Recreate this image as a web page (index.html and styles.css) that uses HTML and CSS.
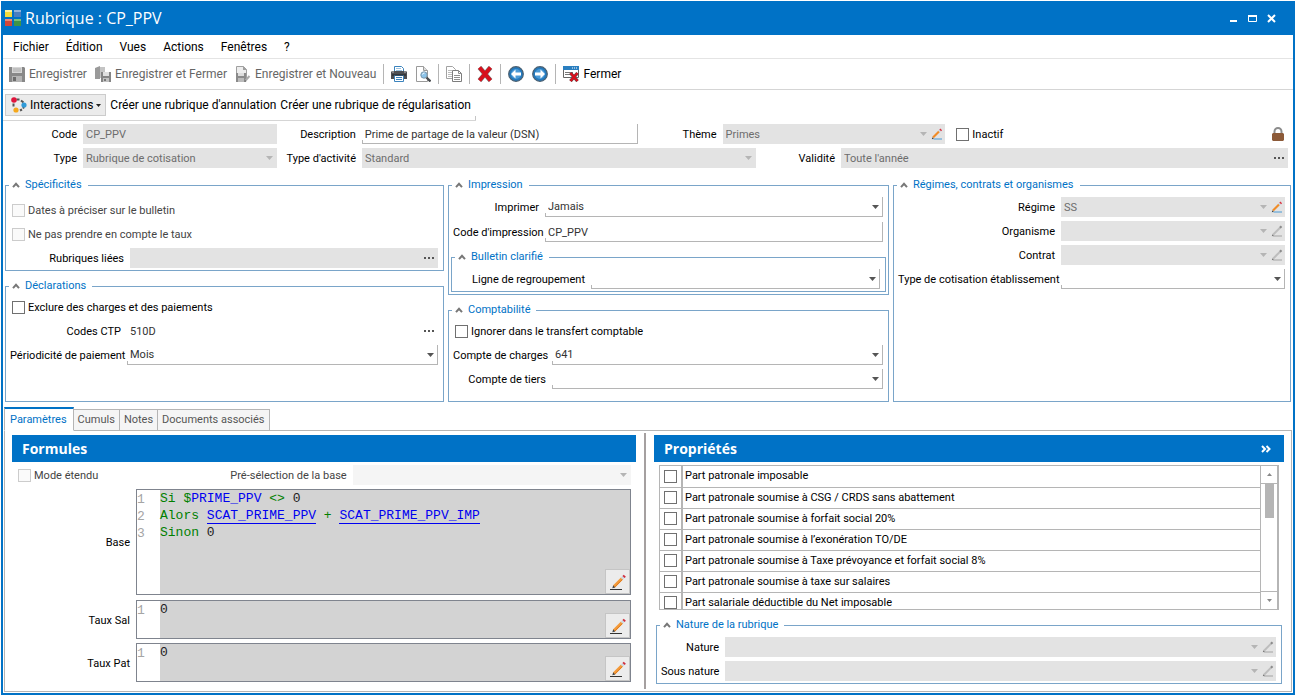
FILE: index.html
```html
<!DOCTYPE html>
<html lang="fr">
<head>
    <meta charset="UTF-8">
    <meta name="viewport" content="width=device-width, initial-scale=1.0">
    <title>Rubrique : CP_PPV</title>
    <link rel="stylesheet" href="styles.css">
</head>
<body>
    <!-- Icônes partagées -->
    <svg class="sprite" width="0" height="0" aria-hidden="true">
        <symbol id="fleche" viewBox="0 0 7 4"><path d="M0 0h7L3.500 4z" fill="currentColor"/></symbol>
        <symbol id="points" viewBox="0 0 11 2"><path d="M0 0h2v2H0zM4 0h2v2H4zM8 0h2v2H8z" fill="currentColor"/></symbol>
        <symbol id="chevron" viewBox="0 0 8 6"><path d="M1 5.200l3-3.400 3 3.400" fill="none" stroke="#777" stroke-width="2"/></symbol>
        <symbol id="crayon" viewBox="0 0 12 12">
            <path d="M2.500 11h8.500" stroke="#4a9ad4"/>
            <path d="M2 9.500l6-6" stroke="#f08c28" stroke-width="2.200"/>
            <path d="M8 3.500l1.200-1.200" stroke="#c8d4dc" stroke-width="2.200"/>
            <path d="M9.200 2.300l1-1" stroke="#d9303e" stroke-width="2.400"/>
            <path d="M.8 11.200l.5-2 1.500 1.500z" fill="#444"/>
        </symbol>
        <symbol id="crayon-gris" viewBox="0 0 12 12">
            <path d="M2 11h9" stroke="#a3a3a3"/>
            <path d="M2 9.700l8-8" stroke="#bdbdbd" stroke-width="2"/>
            <path d="M9 2.700l1.500-1.500" stroke="#8a8a8a" stroke-width="2"/>
            <path d="M.8 11.200l.5-2 1.500 1.500z" fill="#777"/>
        </symbol>
        <symbol id="crayon-grand" viewBox="0 0 16 16">
            <path d="M0 15.500h12" stroke="#333"/>
            <path d="M4 12.500l8-8" stroke="#f39a3a" stroke-width="3"/>
            <path d="M4.700 13.200l8-8" stroke="#e07a1c" stroke-width="1"/>
            <path d="M11.800 4.700l1.700-1.700" stroke="#ccd8e0" stroke-width="3"/>
            <path d="M13.500 3l1.300-1.300" stroke="#d02c3c" stroke-width="3"/>
            <path d="M2.300 14.300l.9-3 2.100 2.100z" fill="#444"/>
        </symbol>
    </svg>

    <div class="fenetre">
        <header class="titre">
            <svg class="logo" viewBox="0 0 16 16">
                <path d="M0 0h7v7H0z" fill="#f4dc3c"/><path d="M9 0h7v7H9z" fill="#4a7fc0"/>
                <path d="M0 9h7v7H0z" fill="#d2473a"/><path d="M9 9h7v7H9z" fill="#3f9448"/>
                <path d="M0 0h7v2H0z" fill="#fdf3a0"/><path d="M9 0h7v2H9z" fill="#8fb2dc"/>
                <path d="M0 9h7v2H0z" fill="#ee8a76"/><path d="M9 9h7v2H9z" fill="#7fbf78"/>
            </svg>
            <h1>Rubrique : CP_PPV</h1>
            <div class="boutons-fenetre">
                <button aria-label="Réduire"><svg viewBox="0 0 9 9"><path d="M1 6h7v2H1z" fill="#fff"/></svg></button>
                <button aria-label="Agrandir"><svg viewBox="0 0 9 9"><path d="M.5 2v5.500h8V2z" fill="none" stroke="#fff"/><path d="M0 1h9v2H0z" fill="#fff"/></svg></button>
                <button aria-label="Fermer la fenêtre"><svg viewBox="0 0 9 9"><path d="M1 1l7 7M8 1l-7 7" stroke="#fff" stroke-width="2"/></svg></button>
            </div>
        </header>

        <nav class="menu">
            <button>Fichier</button>
            <button>Édition</button>
            <button>Vues</button>
            <button>Actions</button>
            <button>Fenêtres</button>
            <button>?</button>
        </nav>

        <!-- Barre d'outils -->
        <div class="outils">
            <button disabled>
                <svg viewBox="0 0 16 16"><path d="M0 1h15l1 1v14H0z" fill="#888"/><path d="M3 1h10v6H3z" fill="#d6d6d6"/><path d="M4 3h8M4 5h8" stroke="#aaa"/><path d="M3 10h10v6H3z" fill="#b4b4b4"/><path d="M4 11h3v4H4z" fill="#6c6c6c"/></svg>
                Enregistrer
            </button>
            <button disabled>
                <svg viewBox="0 0 16 16"><path d="M0 2l5-2v13H0z" fill="#9a9a9a"/><path d="M5 1h5v5H7v6H5z" fill="#c4c4c4"/><path d="M6 6h10v10H6z" fill="#858585"/><path d="M8 6h6v4H8z" fill="#e0e0e0"/><path d="M8 12h6v4H8z" fill="#c2c2c2"/><path d="M9 13h2v2H9z" fill="#777"/></svg>
                Enregistrer et Fermer
            </button>
            <button disabled>
                <svg viewBox="0 0 16 16"><path d="M1.500.5h7l3 3v9h-10z" fill="#ededed" stroke="#a0a0a0"/><path d="M8 0v4h4z" fill="#a0a0a0"/><path d="M1 7h10v9H1z" fill="#8a8a8a"/><path d="M3 7h6v3H3z" fill="#ddd"/><path d="M3 12h6v4H3z" fill="#bbb"/><path d="M10.500 14.500l4-4.500" stroke="#aaa" stroke-width="2"/><path d="M9.500 15.800l.5-2 1.500 1.500z" fill="#777"/></svg>
                Enregistrer et Nouveau
            </button>
            <span class="sep large"></span>
            <button aria-label="Imprimer la fiche">
                <svg viewBox="0 0 16 16"><path d="M3.500 6V.5h7l2 2V6" fill="#fff" stroke="#3b83bd"/><path d="M5 2.500h5M5 4.500h6" stroke="#9cc3e0"/><path d="M1 5h14l1 1v7h-3V9H3v4H0V6z" fill="#4d4f53"/><path d="M1 6h2M13 6h2" stroke="#c0c0c0"/><path d="M3.500 9.500h9v6h-9z" fill="#fff" stroke="#3b83bd"/><path d="M5 11.500h6M5 13.500h6" stroke="#3b83bd"/><path d="M1 9h14" stroke="#202224"/></svg>
            </button>
            <button aria-label="Aperçu">
                <svg viewBox="0 0 16 16"><path d="M1.500.5h7l4 4v11h-11z" fill="#fff" stroke="#9a9a9a"/><path d="M8.500.5v4h4" fill="#ddd" stroke="#9a9a9a"/><circle cx="9" cy="9" r="3.200" fill="#8cc4ea" stroke="#7c98ac"/><path d="M7.500 8.500a2 2 0 0 1 2-1.500" stroke="#fff" fill="none"/><path d="M11.500 11.500l4 4" stroke="#4a4d50" stroke-width="2.400"/></svg>
            </button>
            <span class="sep"></span>
            <button aria-label="Dupliquer">
                <svg viewBox="0 0 16 16"><path d="M.5.5h6l3 3v9h-9z" fill="#fff" stroke="#a2a2a2"/><path d="M2 4.500h4M2 6.500h5M2 8.500h4M2 10.500h4" stroke="#bbb"/><path d="M6.500 4.500h6l3 3v8h-9z" fill="#fff" stroke="#7d7d7d"/><path d="M12.500 4.500v3h3M8 9.500h6M8 11.500h6M8 13.500h6" stroke="#8e8e8e" fill="none"/></svg>
            </button>
            <span class="sep"></span>
            <button aria-label="Supprimer">
                <svg viewBox="0 0 16 16"><path d="M2.500 1.500l11 13M13.500 1.500l-11 13" stroke="#777" stroke-width="4.800"/><path d="M2.500 1.500l11 13M13.500 1.500l-11 13" stroke="#d8101c" stroke-width="3.600"/></svg>
            </button>
            <span class="sep"></span>
            <button aria-label="Précédent">
                <svg viewBox="0 0 16 16"><circle cx="8" cy="8" r="7.300" fill="#2379bd" stroke="#4a5f70" stroke-width="1.200"/><circle cx="8" cy="8" r="5" fill="#4b9ad6"/><path d="M3 8l4.500-4.500v3H13v3H7.500v3z" fill="#fff"/></svg>
            </button>
            <button aria-label="Suivant">
                <svg viewBox="0 0 16 16"><circle cx="8" cy="8" r="7.300" fill="#2379bd" stroke="#4a5f70" stroke-width="1.200"/><circle cx="8" cy="8" r="5" fill="#4b9ad6"/><path d="M13 8L8.500 3.500v3H3v3h5.500v3z" fill="#fff"/></svg>
            </button>
            <span class="sep"></span>
            <button>
                <svg viewBox="0 0 16 16"><path d="M.5 1.500h15v10H.5z" fill="#fff" stroke="#666"/><path d="M0 0h16v4H0z" fill="#2a7fc0"/><path d="M9 2h1M11 2h1M13 2h1" stroke="#fff"/><path d="M2 6.500h8M2 8.500h6" stroke="#777"/><path d="M7.500 7l7 8M14.500 7l-7 8" stroke="#555" stroke-width="3.400"/><path d="M7.500 7l7 8M14.500 7l-7 8" stroke="#d8101c" stroke-width="2.400"/></svg>
                Fermer
            </button>
        </div>

        <div class="liens">
            <button class="interactions">
                <svg viewBox="0 0 16 16"><path d="M5.500 2.500l3 0M10 3.500l2.500 2M2.500 6.500v3M9 13.500l2-1M12 11.500l1-1.500" fill="none" stroke="#555" stroke-width="2"/><circle cx="3" cy="3" r="2.800" fill="#e0143c"/><circle cx="13" cy="8" r="2.600" fill="#2f9ad8"/><circle cx="5" cy="13" r="2.600" fill="#f5a81c"/></svg>
                Interactions
                <svg class="fleche"><use href="#fleche"/></svg>
            </button>
            <button>Créer une rubrique d'annulation</button>
            <button>Créer une rubrique de régularisation</button>
        </div>

        <!-- En-tête de la rubrique -->
        <div class="entete">
            <div class="ligne">
                <label class="court" for="code">Code</label>
                <div class="champ gris" style="flex-grow: 194"><input id="code" type="text" value="CP_PPV" disabled></div>
                <label for="description">Description</label>
                <div class="champ" style="flex-grow: 275"><input id="description" type="text" value="Prime de partage de la valeur (DSN)"></div>
                <label for="theme">Thème</label>
                <div class="champ gris" style="flex-grow: 223">
                    <select id="theme" disabled><option>Primes</option></select>
                    <svg class="fleche"><use href="#fleche"/></svg>
                    <button class="crayon" aria-label="Modifier le thème"><svg><use href="#crayon"/></svg></button>
                </div>
                <div class="etat" style="flex-grow: 343">
                    <label class="coche"><input type="checkbox">Inactif</label>
                    <svg class="cadenas" viewBox="0 0 12 14"><path d="M2.500 7V4.500a3.500 3.500 0 0 1 7 0V7" fill="none" stroke="#8c8c8c" stroke-width="2"/><path d="M1 6h10l1 1v6l-1 1H1l-1-1V7z" fill="#8c5a38"/></svg>
                </div>
            </div>
            <div class="ligne">
                <label class="court" for="type">Type</label>
                <div class="champ gris" style="flex-grow: 194">
                    <select id="type" disabled><option>Rubrique de cotisation</option></select>
                    <svg class="fleche"><use href="#fleche"/></svg>
                </div>
                <label for="activite">Type d'activité</label>
                <div class="champ gris" style="flex-grow: 394">
                    <select id="activite" disabled><option>Standard</option></select>
                    <svg class="fleche"><use href="#fleche"/></svg>
                </div>
                <label for="validite">Validité</label>
                <div class="champ gris" style="flex-grow: 447">
                    <input id="validite" type="text" value="Toute l'année" disabled>
                    <button class="points" aria-label="Choisir la validité"><svg><use href="#points"/></svg></button>
                </div>
            </div>
        </div>

        <!-- Groupes -->
        <div class="groupes">
            <div class="colonne">
                <fieldset class="specificites">
                    <legend><svg class="chevron"><use href="#chevron"/></svg>Spécificités</legend>
                    <div class="ligne"><label class="coche inactif"><input type="checkbox" disabled>Dates à préciser sur le bulletin</label></div>
                    <div class="ligne"><label class="coche inactif"><input type="checkbox" disabled>Ne pas prendre en compte le taux</label></div>
                    <div class="ligne">
                        <label for="liees">Rubriques liées</label>
                        <div class="champ gris">
                            <input id="liees" type="text" disabled>
                            <button class="points" aria-label="Choisir les rubriques"><svg><use href="#points"/></svg></button>
                        </div>
                    </div>
                </fieldset>
                <fieldset class="declarations">
                    <legend><svg class="chevron"><use href="#chevron"/></svg>Déclarations</legend>
                    <div class="ligne"><label class="coche"><input type="checkbox">Exclure des charges et des paiements</label></div>
                    <div class="ligne">
                        <label for="ctp">Codes CTP</label>
                        <div class="champ nu">
                            <input id="ctp" type="text" value="510D">
                            <button class="points" aria-label="Choisir les codes"><svg><use href="#points"/></svg></button>
                        </div>
                    </div>
                    <div class="ligne">
                        <label for="periodicite">Périodicité de paiement</label>
                        <div class="champ">
                            <select id="periodicite"><option>Mois</option></select>
                            <svg class="fleche"><use href="#fleche"/></svg>
                        </div>
                    </div>
                </fieldset>
            </div>

            <div class="colonne">
                <fieldset class="impression">
                    <legend><svg class="chevron"><use href="#chevron"/></svg>Impression</legend>
                    <div class="ligne">
                        <label for="imprimer">Imprimer</label>
                        <div class="champ">
                            <select id="imprimer"><option>Jamais</option></select>
                            <svg class="fleche"><use href="#fleche"/></svg>
                        </div>
                    </div>
                    <div class="ligne">
                        <label for="codeimp">Code d'impression</label>
                        <div class="champ"><input id="codeimp" type="text" value="CP_PPV"></div>
                    </div>
                    <fieldset class="bulletin">
                        <legend><svg class="chevron"><use href="#chevron"/></svg>Bulletin clarifié</legend>
                        <div class="ligne">
                            <label for="regroupement">Ligne de regroupement</label>
                            <div class="champ">
                                <select id="regroupement"><option></option></select>
                                <svg class="fleche"><use href="#fleche"/></svg>
                            </div>
                        </div>
                    </fieldset>
                </fieldset>
                <fieldset class="comptabilite">
                    <legend><svg class="chevron"><use href="#chevron"/></svg>Comptabilité</legend>
                    <div class="ligne"><label class="coche"><input type="checkbox">Ignorer dans le transfert comptable</label></div>
                    <div class="ligne">
                        <label for="charges">Compte de charges</label>
                        <div class="champ">
                            <select id="charges"><option>641</option></select>
                            <svg class="fleche"><use href="#fleche"/></svg>
                        </div>
                    </div>
                    <div class="ligne">
                        <label for="tiers">Compte de tiers</label>
                        <div class="champ">
                            <select id="tiers"><option></option></select>
                            <svg class="fleche"><use href="#fleche"/></svg>
                        </div>
                    </div>
                </fieldset>
            </div>

            <div class="colonne">
                <fieldset class="regimes">
                    <legend><svg class="chevron"><use href="#chevron"/></svg>Régimes, contrats et organismes</legend>
                    <div class="ligne">
                        <label for="regime">Régime</label>
                        <div class="champ gris">
                            <select id="regime" disabled><option>SS</option></select>
                            <svg class="fleche"><use href="#fleche"/></svg>
                            <button class="crayon" aria-label="Modifier le régime"><svg><use href="#crayon"/></svg></button>
                        </div>
                    </div>
                    <div class="ligne">
                        <label for="organisme">Organisme</label>
                        <div class="champ gris">
                            <select id="organisme" disabled><option></option></select>
                            <svg class="fleche"><use href="#fleche"/></svg>
                            <button class="crayon" aria-label="Modifier l'organisme" disabled><svg><use href="#crayon-gris"/></svg></button>
                        </div>
                    </div>
                    <div class="ligne">
                        <label for="contrat">Contrat</label>
                        <div class="champ gris">
                            <select id="contrat" disabled><option></option></select>
                            <svg class="fleche"><use href="#fleche"/></svg>
                            <button class="crayon" aria-label="Modifier le contrat" disabled><svg><use href="#crayon-gris"/></svg></button>
                        </div>
                    </div>
                    <div class="ligne">
                        <label for="cotisation">Type de cotisation établissement</label>
                        <div class="champ">
                            <select id="cotisation"><option></option></select>
                            <svg class="fleche"><use href="#fleche"/></svg>
                        </div>
                    </div>
                </fieldset>
            </div>
        </div>

        <!-- Onglets -->
        <div class="onglets">
            <button class="actif">Paramètres</button>
            <button>Cumuls</button>
            <button>Notes</button>
            <button>Documents associés</button>
        </div>

        <div class="panneau">
            <section class="formules">
                <h2>Formules</h2>
                <div class="ligne mode">
                    <label class="coche inactif"><input type="checkbox" disabled>Mode étendu</label>
                    <label class="inactif" for="preselection">Pré-sélection de la base</label>
                    <div class="champ pale">
                        <select id="preselection" disabled><option></option></select>
                        <svg class="fleche"><use href="#fleche"/></svg>
                    </div>
                </div>
                <div class="formule base">
                    <span class="nom">Base</span>
                    <div class="editeur">
                        <pre class="numeros">1
2
3</pre>
                        <pre class="code"><span class="mot">Si $</span><span class="var">PRIME_PPV</span> <span class="mot">&lt;&gt;</span> 0
<span class="mot">Alors</span> <a href="#">SCAT_PRIME_PPV</a> <span class="mot">+</span> <a href="#">SCAT_PRIME_PPV_IMP</a>
<span class="mot">Sinon</span> 0</pre>
                        <button class="modifier" aria-label="Modifier la base"><svg><use href="#crayon-grand"/></svg></button>
                    </div>
                </div>
                <div class="formule">
                    <label class="nom" for="tauxsal">Taux Sal</label>
                    <div class="editeur">
                        <pre class="numeros">1</pre>
                        <textarea id="tauxsal" class="code" rows="1">0</textarea>
                        <button class="modifier" aria-label="Modifier le taux salarial"><svg><use href="#crayon-grand"/></svg></button>
                    </div>
                </div>
                <div class="formule">
                    <label class="nom" for="tauxpat">Taux Pat</label>
                    <div class="editeur">
                        <pre class="numeros">1</pre>
                        <textarea id="tauxpat" class="code" rows="1">0</textarea>
                        <button class="modifier" aria-label="Modifier le taux patronal"><svg><use href="#crayon-grand"/></svg></button>
                    </div>
                </div>
            </section>

            <div class="separateur"></div>

            <section class="proprietes">
                <h2>Propriétés
                    <button class="replier" aria-label="Replier"><svg viewBox="0 0 10 8"><path d="M1 1l3 3-3 3M5.500 1l3 3-3 3" fill="none" stroke="#fff" stroke-width="2"/></svg></button>
                </h2>
                <div class="liste">
                    <div class="defile">
                        <table>
                            <tr><td><input type="checkbox" id="p1"></td><td><label for="p1">Part patronale imposable</label></td></tr>
                            <tr><td><input type="checkbox" id="p2"></td><td><label for="p2">Part patronale soumise à CSG / CRDS sans abattement</label></td></tr>
                            <tr><td><input type="checkbox" id="p3"></td><td><label for="p3">Part patronale soumise à forfait social 20%</label></td></tr>
                            <tr><td><input type="checkbox" id="p4"></td><td><label for="p4">Part patronale soumise à l’exonération TO/DE</label></td></tr>
                            <tr><td><input type="checkbox" id="p5"></td><td><label for="p5">Part patronale soumise à Taxe prévoyance et forfait social 8%</label></td></tr>
                            <tr><td><input type="checkbox" id="p6"></td><td><label for="p6">Part patronale soumise à taxe sur salaires</label></td></tr>
                            <tr><td><input type="checkbox" id="p7"></td><td><label for="p7">Part salariale déductible du Net imposable</label></td></tr>
                        </table>
                    </div>
                    <div class="ascenseur">
                        <button aria-label="Monter"><svg class="haut"><use href="#fleche"/></svg></button>
                        <div class="piste"><div class="curseur"></div></div>
                        <button aria-label="Descendre"><svg><use href="#fleche"/></svg></button>
                    </div>
                </div>
                <fieldset class="nature">
                    <legend><svg class="chevron"><use href="#chevron"/></svg>Nature de la rubrique</legend>
                    <div class="ligne">
                        <label for="nature">Nature</label>
                        <div class="champ gris">
                            <select id="nature" disabled><option></option></select>
                            <svg class="fleche"><use href="#fleche"/></svg>
                            <button class="crayon" aria-label="Modifier la nature" disabled><svg><use href="#crayon-gris"/></svg></button>
                        </div>
                    </div>
                    <div class="ligne">
                        <label for="sousnature">Sous nature</label>
                        <div class="champ gris">
                            <select id="sousnature" disabled><option></option></select>
                            <svg class="fleche"><use href="#fleche"/></svg>
                            <button class="crayon" aria-label="Modifier la sous nature" disabled><svg><use href="#crayon-gris"/></svg></button>
                        </div>
                    </div>
                </fieldset>
            </section>
        </div>
    </div>
</body>
</html>
```
FILE: styles.css
```css
/* Général */
* {
    box-sizing: border-box;
}

body {
    margin: 0;
    padding: 1px;
    background-color: white;
    font-family: Roboto, Tahoma, sans-serif;
    font-size: 11px;
    line-height: 14px;
    color: black;
}

button, input, select, textarea {
    font: inherit;
    color: inherit;
    margin: 0;
    padding: 0;
    border: none;
    border-radius: 0;
    background: none;
}

button, label {
    white-space: nowrap;
}

svg {
    display: block;
    flex: none;
}

.sprite {
    position: absolute;
}

.fenetre {
    display: flex;
    flex-direction: column;
    min-height: calc(100vh - 2px);
    border: 2px solid #0072c6;
    border-top: none;
}

/* Barre de titre */
.titre {
    display: flex;
    align-items: center;
    height: 34px;
    padding: 0 17px 0 2px;
    background-color: #0072c6;
    color: white;
}

.logo {
    width: 16px;
    height: 16px;
}

h1 {
    flex: 1;
    margin: 0 0 0 4px;
    font-family: "Open Sans", "Segoe UI", sans-serif;
    font-size: 16px;
    line-height: 22px;
    font-weight: normal;
}

.boutons-fenetre {
    display: flex;
    gap: 10px;
}

.boutons-fenetre svg {
    width: 9px;
    height: 9px;
}

/* Menu et barres d'outils */
.menu, .outils, .liens {
    display: flex;
    align-items: center;
    font-size: 12px;
    line-height: 16px;
}

.menu {
    height: 24px;
    gap: 17px;
    padding: 0 10px;
    border-bottom: 1px solid #e4e4e4;
}

.outils {
    height: 31px;
    padding: 0 2px;
    border-bottom: 1px solid #d5d5d5;
}

.outils button {
    display: flex;
    align-items: center;
    gap: 4px;
    padding: 0 4px;
}

.outils button:disabled {
    color: #666;
}

.outils button svg {
    width: 16px;
    height: 16px;
}

.sep {
    width: 1px;
    height: 20px;
    margin: 0 3px;
    background-color: #b5b5b5;
}

.liens {
    align-self: flex-start;
    height: 31px;
    gap: 4px;
    padding: 0 5px 0 2px;
    border-bottom: 1px solid #d5d5d5;
    background: linear-gradient(#c5c5c5, #c5c5c5) right bottom / 1px 4px no-repeat;
}

.interactions {
    display: flex;
    align-items: center;
    gap: 3px;
    height: 22px;
    padding: 0 4px 0 5px;
    border: 1px solid #ccc;
    background-color: #ebebeb;
}

.interactions svg {
    width: 16px;
    height: 16px;
}

.interactions .fleche {
    width: 5px;
    height: 3px;
    margin: 0;
    color: #222;
}

/* Champs */
.ligne {
    display: flex;
    align-items: center;
    height: 20px;
}

label {
    flex: none;
    text-align: right;
    padding: 2px 6px 0 0;
}

.coche {
    display: flex;
    align-items: center;
    gap: 3px;
    padding-right: 0;
}

.inactif {
    color: #444;
}

input[type="checkbox"] {
    display: block;
    flex: none;
    appearance: none;
    width: 13px;
    height: 13px;
    border: 1px solid #707070;
    background-color: white;
}

.coche input[type="checkbox"] {
    margin-top: -2px;
}

input[type="checkbox"]:disabled {
    border-color: #ccc;
    background-color: #fafafa;
}

.champ {
    flex: 1 1 0;
    display: flex;
    align-items: center;
    min-width: 0;
    height: 20px;
    border-right: 1px solid #b5b5b5;
    border-bottom: 1px solid #b5b5b5;
    background: linear-gradient(#b5b5b5, #b5b5b5) left bottom / 1px 3px no-repeat;
    color: #333;
}

.champ input, .champ select {
    flex: 1;
    min-width: 0;
    width: 0;
    height: 18px;
    padding: 1px 3px 0;
    appearance: none;
    outline: none;
    opacity: 1;
}

.champ.gris, .champ.pale, .champ.nu {
    border: none;
    background: none;
}

.champ.gris {
    background-color: #e3e3e3;
    color: #6d6d6d;
}

.champ.pale {
    background-color: #f5f5f5;
}

.fleche {
    width: 7px;
    height: 4px;
    margin-right: 3px;
    color: #555;
}

.gris .fleche, .pale .fleche {
    margin-right: 4px;
    color: #b5b5b5;
}

.points {
    margin-right: 3px;
    color: #555;
}

.points svg {
    width: 11px;
    height: 2px;
}

.crayon {
    margin-right: 2px;
}

.crayon svg {
    width: 12px;
    height: 12px;
}

/* En-tête */
.entete {
    display: flex;
    flex-direction: column;
    gap: 4px;
    padding: 3px 5px 10px 2px;
}

.entete .ligne > label {
    width: 85px;
}

.entete .ligne > .court {
    width: 78px;
}

.etat {
    flex: 1 1 0;
    display: flex;
    align-items: center;
    justify-content: space-between;
}

.etat .coche {
    margin-left: 11px;
}

.cadenas {
    width: 12px;
    height: 14px;
    margin-right: 4px;
}

/* Groupes */
.groupes {
    display: grid;
    grid-template-columns: 439fr 441fr 398fr;
    gap: 4px;
    padding: 0 2px;
}

.colonne {
    display: flex;
    flex-direction: column;
    gap: 8px;
    min-width: 0;
}

fieldset {
    min-width: 0;
    margin: 0;
    padding: 5px 5px 2px 4px;
    border: 1px solid #7aa5c9;
}

.colonne > fieldset:last-child {
    flex: 1;
}

fieldset .ligne + .ligne {
    margin-top: 4px;
}

legend {
    display: flex;
    align-items: center;
    gap: 5px;
    margin-left: -1px;
    padding: 0 6px 0 3px;
    color: #0072c6;
}

.chevron {
    width: 8px;
    height: 6px;
}

fieldset .coche {
    margin-left: 2px;
}

.specificites {
    padding-top: 8px;
}

.specificites label:not(.coche) {
    width: 120px;
}

.declarations, .comptabilite {
    padding-top: 4px;
}

.declarations label:not(.coche) {
    width: 117px;
}

.impression .ligne + .ligne {
    margin-top: 5px;
}

.impression label {
    width: 92px;
}

.impression .bulletin {
    margin: 8px -3px 0 -2px;
}

.impression .bulletin label {
    width: 135px;
}

.comptabilite {
    padding-bottom: 12px;
}

.comptabilite label:not(.coche) {
    width: 99px;
}

.regimes label {
    width: 163px;
}

/* Onglets */
.onglets {
    display: flex;
    align-items: flex-end;
    padding: 5px 1px 0 1px;
    margin-bottom: -1px;
}

.onglets button {
    height: 22px;
    padding: 0 4px;
    border: 1px solid #b5b5b5;
    border-left: none;
    background-color: #f5f5f5;
    color: #555;
}

.onglets .actif {
    position: relative;
    height: 24px;
    padding: 0 6px 0 5px;
    border-left: 1px solid #b5b5b5;
    border-top: 2px solid #0072c6;
    border-bottom-color: white;
    background-color: white;
    color: #0072c6;
}

.panneau {
    flex: 1;
    display: grid;
    grid-template-columns: 624fr 2px 630fr;
    gap: 8px;
    margin: 0 1px 1px 1px;
    padding: 2px 7px;
    border: 1px solid #b5b5b5;
}

.separateur {
    background-color: #a5a0a0;
}

section {
    display: flex;
    flex-direction: column;
    min-width: 0;
    padding: 2px 0 5px;
}

h2 {
    display: flex;
    align-items: center;
    justify-content: space-between;
    height: 27px;
    margin: 0 0 3px;
    padding: 0 13px 0 10px;
    background-color: #0072c6;
    color: white;
    font-family: "Open Sans", "Segoe UI", sans-serif;
    font-size: 14px;
    line-height: 20px;
}

.replier svg {
    width: 10px;
    height: 8px;
}

/* Formules */
.mode {
    margin: 0 5px 4px 6px;
}

.mode .coche {
    flex: 212 1 0;
}

.mode .champ {
    flex: 278 1 0;
}

.formule {
    display: flex;
    align-items: stretch;
    height: 39px;
    margin: 0 5px 4px 0;
}

.formule:last-child {
    margin-bottom: 2px;
}

.formule.base {
    flex: 1;
    min-height: 60px;
    margin-bottom: 5px;
}

.nom {
    width: 124px;
    align-self: center;
    text-align: right;
    padding: 2px 6px 0 0;
}

.editeur {
    position: relative;
    flex: 1;
    display: flex;
    border: 1px solid #7f848e;
    background-color: #d3d3d3;
    font-family: "Liberation Mono", "Courier New", monospace;
    font-size: 13px;
    line-height: 17px;
}

.editeur pre {
    margin: 0;
    font: inherit;
}

.editeur .numeros {
    width: 23px;
    padding-top: 1px;
    background-color: white;
    color: #a5a5a5;
}

.code {
    flex: 1;
    color: #222;
    resize: none;
    outline: none;
}

.mot {
    color: #008000;
}

.var, .code a {
    color: #0000f0;
}

.code a {
    text-decoration: none;
    border-bottom: 1px solid #0000f0;
}

.modifier {
    position: absolute;
    right: 0;
    bottom: 0;
    display: flex;
    align-items: center;
    justify-content: center;
    width: 25px;
    height: 25px;
    border: 1px solid #c5c5c5;
    background-color: #ececec;
}

.modifier svg {
    width: 16px;
    height: 16px;
}

/* Propriétés */
.liste {
    flex: 1 1 0;
    display: flex;
    min-height: 100px;
    margin: 0 5px 8px;
    border: 1px solid #b5b5b5;
}

.defile {
    flex: 1 1 0;
    max-height: 143px;
    overflow: hidden;
}

table {
    width: 100%;
    border-collapse: collapse;
}

td {
    height: 21px;
    padding: 0 2px;
    border-bottom: 1px solid #b5b5b5;
}

td:first-child {
    width: 22px;
    padding: 0 4px;
    border-right: 2px solid #b5b5b5;
}

.ascenseur {
    display: flex;
    flex-direction: column;
    width: 18px;
    border: 1px solid #b5b5b5;
    border-top: none;
    border-bottom: none;
}

.ascenseur button {
    display: flex;
    align-items: center;
    justify-content: center;
    height: 17px;
}

.ascenseur button svg {
    width: 5px;
    height: 3px;
    color: #888;
}

.haut {
    transform: rotate(180deg);
}

.piste {
    flex: 1;
    border-top: 1px solid #b5b5b5;
    border-bottom: 1px solid #b5b5b5;
}

.curseur {
    width: 9px;
    height: 34px;
    margin: 0 auto;
    background-color: #b5b5b5;
}

.nature {
    margin: 0 2px;
}

.nature label {
    width: 64px;
}
```
